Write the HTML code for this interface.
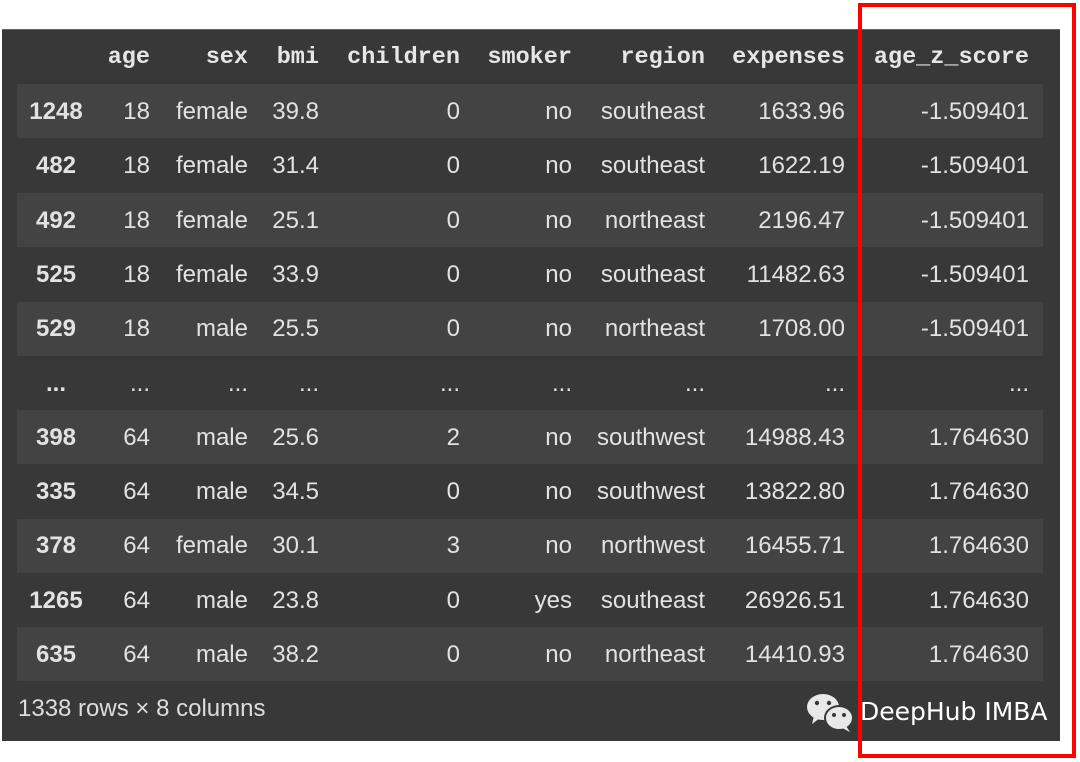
<!DOCTYPE html>
<html><head><style>
body{margin:0;width:1080px;height:762px;background:#fff;position:relative;overflow:hidden;font-family:"Liberation Sans",sans-serif}
.panel{position:absolute;left:2px;top:29px;width:1058px;height:711px;background:#383838;border-top:1px solid #666}
.stripe{position:absolute;left:17px;width:1026px;height:54px;background:#434343}
.t{position:absolute;color:#e2e2e2;font-size:24px;line-height:28px;white-space:nowrap}
.h{position:absolute;color:#e6e6e6;font-family:"Liberation Mono",monospace;font-weight:bold;font-size:23.5px;line-height:28px;white-space:nowrap}
.idx{font-weight:bold}
.red{position:absolute;left:858px;top:3px;width:210px;height:747px;border:4px solid #f00}
</style></head><body>
<div class="panel"></div>
<div class="stripe" style="top:84px"></div>
<div class="stripe" style="top:193px"></div>
<div class="stripe" style="top:302px"></div>
<div class="stripe" style="top:410px"></div>
<div class="stripe" style="top:519px"></div>
<div class="stripe" style="top:627px"></div>
<div id="c"></div>
<div class="t" style="left:18px;top:695px;color:#ddd">1338 rows × 8 columns</div>
<svg style="position:absolute;left:806px;top:692px" width="48" height="40" viewBox="0 0 48 40">
<ellipse cx="17" cy="15" rx="16" ry="13" fill="#e8e8e8"/><path d="M8 24 L6 32 L14 26Z" fill="#e8e8e8"/>
<circle cx="11" cy="11" r="2.2" fill="#383838"/><circle cx="23" cy="11" r="2.2" fill="#383838"/>
<ellipse cx="33" cy="26" rx="14" ry="12" stroke="#383838" stroke-width="2" fill="#e8e8e8"/><path d="M40 34 L44 40 L36 36Z" fill="#e8e8e8"/>
<circle cx="28" cy="23" r="2" fill="#383838"/><circle cx="38" cy="23" r="2" fill="#383838"/>
</svg>
<div class="t" style="left:860px;top:697px;color:#fff;font-family:'DejaVu Sans',sans-serif;font-size:25px;line-height:30px">DeepHub IMBA</div>
<div class="red"></div>
<script>
var rights=[150,248,319,460,572,705,845,1029];
var hdr=["age","sex","bmi","children","smoker","region","expenses","age_z_score"];
var rows=[["1248","18","female","39.8","0","no","southeast","1633.96","-1.509401"],
["482","18","female","31.4","0","no","southeast","1622.19","-1.509401"],
["492","18","female","25.1","0","no","northeast","2196.47","-1.509401"],
["525","18","female","33.9","0","no","southeast","11482.63","-1.509401"],
["529","18","male","25.5","0","no","northeast","1708.00","-1.509401"],
["...","...","...","...","...","...","...","...","..."],
["398","64","male","25.6","2","no","southwest","14988.43","1.764630"],
["335","64","male","34.5","0","no","southwest","13822.80","1.764630"],
["378","64","female","30.1","3","no","northwest","16455.71","1.764630"],
["1265","64","male","23.8","0","yes","southeast","26926.51","1.764630"],
["635","64","male","38.2","0","no","northeast","14410.93","1.764630"]];
var h="";
hdr.forEach(function(s,i){h+='<div class="h" style="right:'+(1080-rights[i])+'px;top:44px">'+s+'</div>';});
rows.forEach(function(r,j){var y=98+j*54.3;
h+='<div class="t idx" style="left:16px;width:80px;text-align:center;top:'+y+'px">'+r[0]+'</div>';
for(var i=1;i<9;i++)h+='<div class="t" style="right:'+(1080-rights[i-1])+'px;top:'+y+'px">'+r[i]+'</div>';});
document.getElementById("c").innerHTML=h;
</script>
</body></html>
